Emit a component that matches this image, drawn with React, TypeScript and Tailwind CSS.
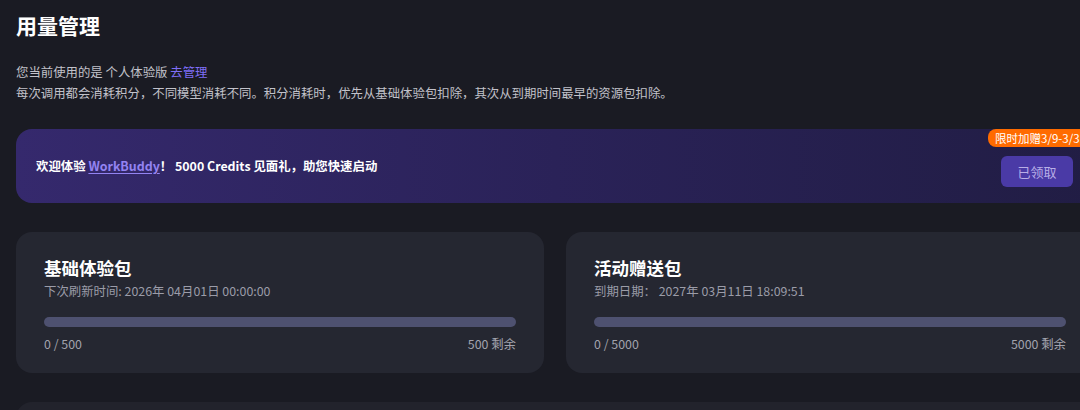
import React from "react";

const font = { fontFamily: '"Noto Sans CJK SC", "Noto Sans", sans-serif' };

const PackCard = ({
  title,
  sub,
  used,
  total,
}: {
  title: string;
  sub: string;
  used: number;
  total: number;
}) => {
  return (
    <div className="bg-[#252731] rounded-2xl w-[528px] h-[141px] px-7 pt-6">
      <div className="text-[17.5px] leading-6 font-bold text-white">{title}</div>
      <div className="text-[12.4px] leading-[18px] mt-[2px] text-[#9b9ca8]">{sub}</div>
      <div className="mt-[17px] h-[10px] rounded-full bg-[#4e5170] overflow-hidden">
        <div className="h-full bg-[#7b6cf6]" style={{ width: `${(used / total) * 100}%` }}></div>
      </div>
      <div className="mt-2 flex justify-between text-[12.4px] leading-[18px] text-[#a2a3ad]">
        <span>
          {used} / {total}
        </span>
        <span>{total - used} 剩余</span>
      </div>
    </div>
  );
};

export default function App() {
  return (
    <div className="w-[1080px] h-[410px] overflow-hidden bg-[#1a1b23]" style={font}>
      <div className="w-[1110px] px-4 pt-[11px]">
        <div className="text-[21px] leading-7 font-bold text-white">用量管理</div>

        <div className="mt-[23px] text-[12.4px] leading-[21px] text-[#c2c2ca]">
          <div>
            您当前使用的是 个人体验版 <span className="text-[#7f6ef7]">去管理</span>
          </div>
          <div>每次调用都会消耗积分，不同模型消耗不同。积分消耗时，优先从基础体验包扣除，其次从到期时间最早的资源包扣除。</div>
        </div>

        {/* 欢迎 banner */}
        <div className="relative mt-[25px] h-[74px] rounded-2xl bg-gradient-to-r from-[#35296d] via-[#2a2258] to-[#211d44] flex items-center justify-between pl-5 pr-[21px]">
          <div className="text-[12.4px] font-bold text-white">
            欢迎体验 <span className="text-[#9383f2] underline underline-offset-2">WorkBuddy</span>！ 5000 Credits 见面礼，助您快速启动
          </div>
          <button className="mt-[11px] w-[72px] h-[31px] rounded-md bg-[#4a3aa6] text-[13px] text-[#b8aee6]">
            已领取
          </button>
          <div className="absolute top-0 right-0 h-[18px] pl-[7px] pr-2 rounded-tr-2xl rounded-bl-lg rounded-tl-lg bg-[#ff6b00] text-[11.5px] leading-[18px] text-white">
            限时加赠3/9-3/31
          </div>
        </div>

        <div className="mt-[29px] flex gap-[22px]">
          <PackCard title="基础体验包" sub="下次刷新时间: 2026年 04月01日 00:00:00" used={0} total={500} />
          <PackCard title="活动赠送包" sub="到期日期：  2027年 03月11日 18:09:51" used={0} total={5000} />
        </div>

        <div className="mt-[29px] h-[80px] rounded-t-2xl bg-[#22232c]"></div>
      </div>
    </div>
  );
}
